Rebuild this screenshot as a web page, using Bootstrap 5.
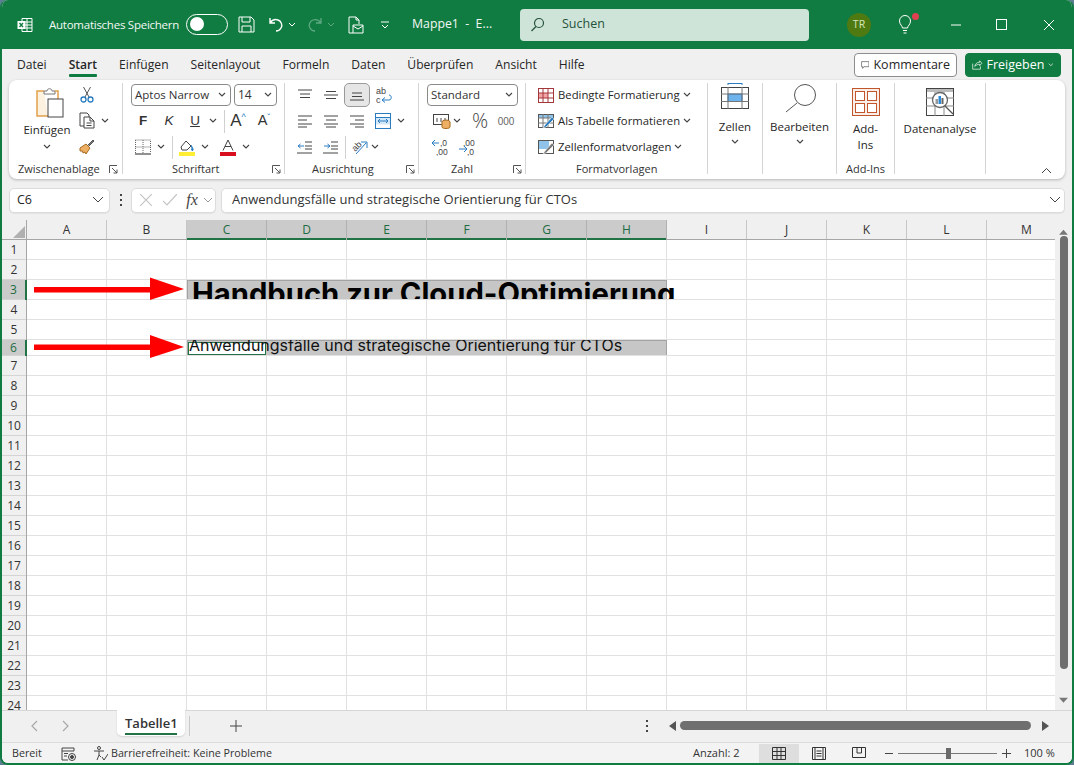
<!DOCTYPE html>
<html lang="de">
<head>
<meta charset="utf-8">
<title>Mappe1 - Excel</title>
<link rel="stylesheet" href="https://cdn.jsdelivr.net/npm/bootstrap@5.3.0/dist/css/bootstrap.min.css">
<style>
html,body{margin:0;height:765px;overflow:hidden;background:#5d7f92}
body{font-family:"Open Sans","Noto Sans",sans-serif;font-size:12px;color:#262626}
.xl-win{width:1074px;height:765px;background:#f0f0f0;border-radius:8px;overflow:hidden;border:solid #107c41;border-width:0 2px 2px 2px}
.xl-title{height:49px;background:#107c41;color:#fff;margin:0 -2px}
.xl-title svg{display:block;flex:none}
.tt-txt{font-size:12.3px;color:#f3f8f5}
.tt-auto{margin-left:16px;width:137px;font-size:11.5px;letter-spacing:-.25px}
.tt-excel{margin-left:17px}
.tt-toggle{width:42px;height:21px;border:1.5px solid #fff;border-radius:11px;padding:2px 3px}
.tt-toggle i{display:block;width:14px;height:14px;border-radius:50%;background:#fff}
.tt-doc{width:108px}
.xl-search{width:289px;height:32px;background:#cfe4d8;border-radius:4px;color:#25523a;font-size:12.5px;padding-left:9px}
.xl-avatar{width:24px;height:24px;border-radius:50%;background:#4f7a12;color:#d8e6b8;font-size:10.5px}
.xl-bulb{position:relative;width:20px}
.xl-bulb i{position:absolute;right:-2px;top:-2px;width:7px;height:7px;border-radius:50%;background:#e04050}
.ml1{margin-left:1px}.ml2{margin-left:2px}.ml3{margin-left:3px}.ml4{margin-left:4px}.ml5{margin-left:5px}.ml6{margin-left:6px}.ml10{margin-left:10px}.ml13{margin-left:13px}.ml16{margin-left:16px}.ml17{margin-left:17px}.ml22{margin-left:22px}.ml26{margin-left:26px}.ml33{margin-left:33px}.ml34{margin-left:34px}.ml36{margin-left:36px}.ml38{margin-left:38px}
.xl-tabs{height:31px;padding-left:15px}
.xl-tabs .nav-link{padding:0;color:#262626;font-size:12.1px;line-height:30px;height:30px;position:relative}
.xl-tabs .nav-item{margin-right:22px}
.xl-tabs .nav-link.active{font-weight:600;color:#262626}
.xl-tabs .nav-link.active::after{content:"";position:absolute;left:0;right:0;bottom:3px;height:2.5px;background:#107c41;border-radius:1px}
.xl-cmd{height:24px;font-size:12.5px;padding:0 6px;border-radius:4px;line-height:22px}
.xl-cmt{width:103px;background:#fff;border:1px solid #8d8d8d;color:#262626}
.xl-share{width:96px;background:#107c41;border:1px solid #107c41;color:#fff;margin:0 11px 0 8px}
.xl-cmd:hover{background:inherit}
.xl-ribbon{height:99px;margin:0 7px;background:#fff;border-radius:8px;box-shadow:0 1px 3px rgba(0,0,0,.25);padding-top:3px;position:relative}
.rb-g{height:91px;border-right:1px solid #d4d4d4;flex:none}
.rb-z{width:114px}.rb-s{width:162px}.rb-a{width:134px}.rb-n{width:107px}.rb-f{width:182px}.rb-ze{width:55px}.rb-b{width:74px}.rb-ai{width:58px}.rb-d{width:91px;padding-top:5px}
.rb-body{height:77px;margin-top:-1px}
.rb-lab{height:20px;line-height:20px;font-size:11px;color:#333;white-space:nowrap}
.rb-lab svg{flex:none}
.lp-z{padding:0 4px 0 9px}.lp-s{padding:0 3px 0 49px}.lp-a{padding:0 3px 0 27px}.lp-n{padding:0 3px 0 32px}.lp-f{padding:0 0 0 50px}
.rw{height:26px}
.pd7{padding-left:7px}.pd8{padding-left:8px}
.tc{display:inline-flex;align-items:center;justify-content:center;flex:none;height:25px;color:#333}
.c6{width:6px}.c8{width:8px}.c10{width:10px}.c12{width:12px}.c20{width:20px}.c24{width:24px}.c25{width:25px}.c26{width:26px}
.vs{width:1px;height:23px;background:#d0d0d0;flex:none}
.tc-on{background:#e6e6e6;border:1px solid #9a9a9a;border-radius:5px;height:24px}
.rb-combo{height:22px;border:1px solid #8a8a8a;border-radius:4px;padding:0 4px 0 3px;font-size:11.5px;margin-top:2px;color:#333;background:#fff}
.cb-f{width:100px}.cb-n{width:43px;margin-left:3px;font-size:12px}.cb-sd{width:91px}
.rb-paste{width:56px;margin-left:10px}
.pa-ic{margin:5px 0 0 5px}
.pa-lab{margin-top:3px}
.pa-ch{margin-top:6px}
.rb-big{font-size:11.5px;line-height:16px;color:#262626;text-align:center}
.rb-fmt{height:26px;padding-left:12px;font-size:11.3px;white-space:nowrap;color:#262626}
.rb-fmt span{margin:0 3px 0 4px}
.rb-ch{position:absolute;right:13px;bottom:5px}
.ze-lab{margin-top:9px}.be-lab{margin-top:6px}.ai-lab{margin-top:5px}
.be-ic{margin-left:2px}
.ai-body{margin-top:5px;height:71px}
.ft-sans{font-family:"Liberation Sans",sans-serif;font-size:13.5px}
.ft-a1{font-size:17px}
.ft-a2{font-size:14.5px}
.ft-up{font-size:9px;color:#2a7cc0;top:-.5em}
.ft-pct{font-family:"Open Sans",sans-serif;font-size:20px;font-weight:300;color:#444}
.ft-000{font-family:"Liberation Sans",sans-serif;font-size:10px;color:#666}
.xl-fx{height:26px;margin:8px 7px 7px}
.fx-box{background:#fff;border:1px solid #dcdcdc;border-radius:5px;height:25px;box-shadow:0 1px 1px rgba(0,0,0,.06)}
.fx-name{width:101px;padding:0 5px 0 7px;font-size:12.5px}
.fx-tools{width:85px;margin-left:21px;padding:0 1px 0 2px}
.fx-text{margin-left:5px;font-size:13px;padding:0 3px 0 10px;color:#333}
.fx-dots{margin:0 -12px 0 10px}
.fx-fn{font-family:"Liberation Serif",serif;font-size:16px;color:#444}
.xl-main{height:490px}
.xl-sheet{position:relative;width:1053px;overflow:hidden;background:#fff}
.hd-r{height:20px;background:#f0f0f0;border-bottom:1px solid #a6a6a6}
.hd-c{width:80px;height:19px;line-height:19px;text-align:center;font-size:12px;border-right:1px solid #c6c6c6;color:#333;flex:none}
.hd-c.sel{background:#cbcbcb;color:#1d6b42;box-shadow:inset 0 -2px 0 #217346;height:20px;border-right-color:#b0b0b0}
.hd-corner{width:25px;flex:none;height:19px;border-right:1px solid #a6a6a6;position:relative}
.hd-tri{position:absolute;right:1px;bottom:1px}
.sr{height:20px;border-bottom:1px solid #e1e1e1;display:flex}
.sr-6{height:16px}
.rh{width:25px;flex:none;background:#f0f0f0;border-right:1px solid #a6a6a6;text-align:center;font-size:12px;line-height:20px;color:#333;margin-bottom:-1px;box-shadow:inset 0 -1px 0 #d4d4d4}
.rh.sel{background:#cbcbcb;color:#1d6b42;border-right:2px solid #217346}
.sr-6 .rh{line-height:15px}
.rc{flex:1;position:relative;overflow:hidden;background-image:linear-gradient(to right,transparent 79px,#e1e1e1 79px);background-size:80px 100%}
.sel-a{margin-left:160px;width:480px;height:20px;background:#c6c6c6;border:1px solid #a3a3a3;white-space:nowrap;font-family:"Inter","Liberation Sans",sans-serif}
.sel-t{font-size:29.2px;font-weight:700;color:#000;line-height:25px;padding:0 0 0 4px}
.sel-s{font-size:16px;color:#111;line-height:8px;height:16px;padding:0 0 0 1px;position:relative}
.sel-s span{position:relative;z-index:1}
.act{position:absolute;left:0;top:1px;width:78px;height:13px;background:#fff;border:1px solid #217346}
.xl-arrows{position:absolute;left:0;top:0;pointer-events:none}
.xl-vs{width:17px;background:#f0f0f0}
.vs-thumb{width:8px;height:446px;background:#6f6f6f;border-radius:4px;margin:-5px auto 0 5px}
.vs-dn{margin-top:24px}
.xl-bar{height:32px;border-top:1px solid #d6d6d6;background:#f0f0f0;padding-bottom:2px}
.tb-nav{width:115px;padding-left:28px}
.tb-tab{width:68px;height:26px;margin-top:-1px;background:#fff;border-radius:0 0 5px 5px;font-weight:600;font-size:13px;color:#333;padding:0 8px;line-height:26px;position:relative;box-shadow:0 1px 2px rgba(0,0,0,.12)}
.tb-tab::after{content:"";position:absolute;left:8px;right:8px;bottom:1px;height:2px;background:#217346}
.tb-sep{width:1px;height:20px;background:#c8c8c8;margin:0 0 0 4px}
.tb-plus{margin-left:40px}
.tb-dots{margin-left:404px}
.tb-l{margin-left:21px}
.hs-thumb{width:351px;height:9px;background:#6f6f6f;border-radius:5px;margin:0 8px 0 4px}
.tb-r{margin-left:3px}
.xl-status{height:21px;border-top:1px solid #dcdcdc;background:#f3f3f3;font-size:10.7px;color:#333;padding:1px 0 0 10px;white-space:nowrap}
.st-bereit{width:32px}
.st-a11y{margin-left:3px;width:582px}
.st-count{width:66px;font-size:11px}
.st-view{width:40px;height:20px}
.st-view.on{background:#dedede}
.st-slider{width:99px;height:1px;background:#777;position:relative;margin:0 5px}
.st-slider i{position:absolute;left:48px;top:-5px;width:5px;height:11px;background:#6a6a6a}
.st-minus{margin-left:6px}
.st-zoom{margin-left:13px;font-size:11px}
</style>
</head>
<body>
<div class="xl-win d-flex flex-column">

<div class="xl-title d-flex align-items-center">
  <svg class="tt-excel" width="16" height="16" viewBox="0 0 16 16" fill="none" stroke="#fff"><path d="M5 1.500h10v13H5zM5 5h10M5 8h10M5 11h10M10 1.500v13"/><rect x="0.500" y="4" width="8" height="8" fill="#fff" stroke="none"/><path d="M2.500 6l3.500 4M6 6l-3.500 4" stroke="#107c41" stroke-width="1.400"/></svg>
  <span class="tt-txt tt-auto text-nowrap">Automatisches Speichern</span>
  <span class="tt-toggle"><i></i></span>
  <svg class="ml10" width="17" height="17" viewBox="0 0 17 17" fill="none" stroke="#fff" stroke-width="1"><path d="M1 1h12l3 3v12H1zM4 1v5h8V1M4 16v-6h9v6"/></svg>
  <svg class="ml13" width="17" height="17" viewBox="0 0 17 17" fill="none" stroke="#fff" stroke-width="1.400"><path d="M2 2v5h5M2 7c2-3 5-4 8-3 3 1 5 5 3 8-1 2-3 3-5 3"/></svg>
  <svg class="ml3" width="8" height="6" viewBox="0 0 8 6" fill="none" stroke="#fff"><path d="M1 1l3 3 3-3"/></svg>
  <svg class="ml10" width="17" height="17" viewBox="0 0 17 17" fill="none" stroke="#5fa883" stroke-width="1.300"><path d="M15 2v5h-5M15 7c-2-3-5-4-8-3-3 1-5 5-3 8 1 2 3 3 5 3"/></svg>
  <svg class="ml4" width="8" height="6" viewBox="0 0 8 6" fill="none" stroke="#5fa883"><path d="M1 1l3 3 3-3"/></svg>
  <svg class="ml13" width="16" height="18" viewBox="0 0 16 18" fill="none" stroke="#fff"><path d="M1 1h7l3 3v4M1 1v16h4M8 1v3h3M5 9h10v8H5zM5 10l5 3 5-3"/></svg>
  <svg class="ml16" width="10" height="8" viewBox="0 0 10 8" fill="none" stroke="#fff"><path d="M1 1h8M2 4l3 3 3-3"/></svg>
  <span class="tt-txt tt-doc ml22 text-nowrap">Mappe1&nbsp; -&nbsp; E...</span>
  <div class="xl-search d-flex align-items-center">
    <svg class="ml1" width="15" height="15" viewBox="0 0 15 15" fill="none" stroke="#25523a" stroke-width="1.200"><circle cx="9" cy="6" r="4.500"/><path d="M6 9.500L1.500 14"/></svg>
    <span class="ml17">Suchen</span>
  </div>
  <span class="xl-avatar ml38 d-flex align-items-center justify-content-center">TR</span>
  <span class="xl-bulb ml26">
    <svg width="16" height="20" viewBox="0 0 16 20" fill="none" stroke="#fff"><path d="M5.500 13c0-2-3-3.500-3-7a5.500 5.500 0 0 1 11 0c0 3.500-3 5-3 7zM6 15.500h4M6.500 18h3"/></svg><i></i>
  </span>
  <svg class="ml33" width="12" height="2" viewBox="0 0 12 2" stroke="#fff"><path d="M1 1h10"/></svg>
  <svg class="ml34" width="11" height="11" viewBox="0 0 11 11" fill="none" stroke="#fff"><rect x=".5" y=".5" width="10" height="10"/></svg>
  <svg class="ml36" width="12" height="12" viewBox="0 0 12 12" stroke="#fff"><path d="M1 1l10 10M11 1L1 11"/></svg>
</div>

<div class="xl-tabs d-flex align-items-center">
  <ul class="nav flex-nowrap me-auto">
    <li class="nav-item"><a class="nav-link" href="#">Datei</a></li>
    <li class="nav-item"><a class="nav-link active" href="#">Start</a></li>
    <li class="nav-item"><a class="nav-link" href="#">Einfügen</a></li>
    <li class="nav-item"><a class="nav-link" href="#">Seitenlayout</a></li>
    <li class="nav-item"><a class="nav-link" href="#">Formeln</a></li>
    <li class="nav-item"><a class="nav-link" href="#">Daten</a></li>
    <li class="nav-item"><a class="nav-link" href="#">Überprüfen</a></li>
    <li class="nav-item"><a class="nav-link" href="#">Ansicht</a></li>
    <li class="nav-item"><a class="nav-link" href="#">Hilfe</a></li>
  </ul>
  <button class="btn xl-cmd xl-cmt d-flex align-items-center gap-1 text-nowrap"><svg width="15" height="14" viewBox="0 0 15 14" fill="none" stroke="#333"><path d="M1 1h13v9H5l-2 3v-3H1z"/></svg>Kommentare</button>
  <button class="btn xl-cmd xl-share d-flex align-items-center gap-1 text-nowrap"><svg width="15" height="14" viewBox="0 0 15 14" fill="none" stroke="#fff"><path d="M1 5v8h11V9M4 9c0-3 3-6 7-6V1l3 3.500L11 8V6C8 6 6 7 4 9z"/></svg>Freigeben<svg width="8" height="6" viewBox="0 0 8 6" fill="none" stroke="#fff"><path d="M1 1l3 3 3-3"/></svg></button>
</div>

<svg width="0" height="0" class="position-absolute">
  <defs>
    <symbol id="chv" viewBox="0 0 8 6"><path d="M1 1l3 3 3-3" fill="none" stroke="#444" stroke-width="1.100"/></symbol>
    <symbol id="lau" viewBox="0 0 9 9"><path d="M.5 8V.5H8M3 3l5 5M8 4.500V8H4.500" fill="none" stroke="#555"/></symbol>
    <symbol id="lt" viewBox="0 0 16 14"><path d="M1 2h14M1 6h9M1 10h14M1 13h9" fill="none" stroke="#444"/></symbol>
    <symbol id="ct" viewBox="0 0 16 14"><path d="M1 2h14M3 6h10M1 10h14M3 13h10" fill="none" stroke="#444"/></symbol>
    <symbol id="rt" viewBox="0 0 16 14"><path d="M1 2h14M6 6h9M1 10h14M6 13h9" fill="none" stroke="#444"/></symbol>
    <symbol id="vt" viewBox="0 0 16 14"><path d="M1 2h14M3 6h10M3 9.500h10" fill="none" stroke="#444"/></symbol>
    <symbol id="vm" viewBox="0 0 16 14"><path d="M3 3.500h10M1 7h14M3 10.500h10" fill="none" stroke="#444"/></symbol>
    <symbol id="vb" viewBox="0 0 16 14"><path d="M3 5h10M3 8.500h10M1 12h14" fill="none" stroke="#444"/></symbol>
  </defs>
</svg>

<div class="xl-ribbon d-flex">
  <div class="rb-g rb-z">
    <div class="rb-body d-flex">
      <div class="rb-paste rb-big d-flex flex-column align-items-center">
        <svg class="pa-ic" width="30" height="32" viewBox="0 0 30 32" fill="none"><path d="M9 4H2v25h11" stroke="#e2a049" stroke-width="1.500" fill="#fdf2e0"/><path d="M9 4h3c0-3 5-3 5 0h3v3H9z" stroke="#777" fill="#fff"/><path d="M20 4h3v8" stroke="#e2a049" stroke-width="1.500"/><rect x="13" y="12" width="15" height="18" fill="#fff" stroke="#444"/></svg>
        <span class="pa-lab">Einfügen</span>
        <svg class="pa-ch" width="8" height="6"><use href="#chv"/></svg>
      </div>
      <div>
        <div class="rw d-flex"><span class="tc c24"><svg width="14" height="17" viewBox="0 0 14 17" fill="none"><path d="M3.500 1L9 11M10.500 1L5 11" stroke="#555"/><circle cx="3.500" cy="13.500" r="2.500" stroke="#2a7cc0" stroke-width="1.300"/><circle cx="10.500" cy="13.500" r="2.500" stroke="#2a7cc0" stroke-width="1.300"/></svg></span></div>
        <div class="rw d-flex"><span class="tc c24"><svg width="16" height="17" viewBox="0 0 16 17" fill="none" stroke="#444"><path d="M5 14H1V1h7l2 2v2"/><path d="M5 5h6l4 4v7H5zM11 5v4h4M7.500 11h5M7.500 13.500h5"/></svg></span><span class="tc c12"><svg width="8" height="6"><use href="#chv"/></svg></span></div>
        <div class="rw d-flex"><span class="tc c24"><svg width="16" height="16" viewBox="0 0 16 16" fill="none"><path d="M1 9l6-4 4 4-4 6-1-2-2 1-.5-2L1 12z" fill="#eeb064" stroke="#a76a1e"/><path d="M9 6l5-5 1 1-5 5" fill="#777" stroke="#555"/></svg></span></div>
      </div>
    </div>
    <div class="rb-lab lp-z d-flex align-items-center justify-content-between"><span>Zwischenablage</span><svg width="9" height="9"><use href="#lau"/></svg></div>
  </div>

  <div class="rb-g rb-s">
    <div class="rb-body">
      <div class="rw d-flex pd8">
        <div class="rb-combo cb-f d-flex align-items-center justify-content-between">Aptos Narrow<svg width="8" height="6"><use href="#chv"/></svg></div>
        <div class="rb-combo cb-n d-flex align-items-center justify-content-between">14<svg width="8" height="6"><use href="#chv"/></svg></div>
      </div>
      <div class="rw d-flex align-items-center pd7">
        <span class="tc c26 fw-bold ft-sans">F</span>
        <span class="tc c26 fst-italic ft-sans">K</span>
        <span class="tc c26 text-decoration-underline ft-sans">U</span>
        <span class="tc c10"><svg width="8" height="6"><use href="#chv"/></svg></span>
        <span class="vs ml6"></span>
        <span class="tc c26 ft-sans ft-a1">A<sup class="ft-up">^</sup></span>
        <span class="tc c26 ft-sans ft-a2">A<sup class="ft-up">ˇ</sup></span>
      </div>
      <div class="rw d-flex align-items-center pd7">
        <span class="tc c25"><svg width="16" height="16" viewBox="0 0 16 16" fill="none" stroke="#666" stroke-dasharray="1 1"><path d="M.5 1h15v13M.5 1v13M8 1v13M.5 8h15"/><path d="M0 15h16" stroke="#222" stroke-dasharray="none"/></svg></span>
        <span class="tc c12"><svg width="8" height="6"><use href="#chv"/></svg></span>
        <span class="vs ml5"></span>
        <span class="tc c26 ml1"><svg width="18" height="18" viewBox="0 0 18 18" fill="none"><path d="M3 9l5-6 5 5-4 4H4z" stroke="#444"/><path d="M13 7l2 4c1 2-2 2-1.500 0" stroke="#2a7cc0" fill="#2a7cc0"/><rect x="1" y="14" width="16" height="4" fill="#ffee33"/></svg></span>
        <span class="tc c10"><svg width="8" height="6"><use href="#chv"/></svg></span>
        <span class="tc c26 ml5"><svg width="16" height="17" viewBox="0 0 16 17"><path d="M3 11.500L8 1l5 10.500M5 7.500h6" fill="none" stroke="#444"/><rect y="13" width="16" height="4" fill="#d80f1e"/></svg></span>
        <span class="tc c10"><svg width="8" height="6"><use href="#chv"/></svg></span>
      </div>
    </div>
    <div class="rb-lab lp-s d-flex align-items-center justify-content-between"><span>Schriftart</span><svg width="9" height="9"><use href="#lau"/></svg></div>
  </div>

  <div class="rb-g rb-a">
    <div class="rb-body">
      <div class="rw d-flex align-items-center pd7">
        <span class="tc c26"><svg width="16" height="14"><use href="#vt"/></svg></span>
        <span class="tc c26"><svg width="16" height="14"><use href="#vm"/></svg></span>
        <span class="tc c26 tc-on"><svg width="16" height="14"><use href="#vb"/></svg></span>
        <span class="tc c26 ml1"><svg width="16" height="18" viewBox="0 0 16 18" fill="none"><text x="0" y="8" font-size="9" fill="#444" font-family="Liberation Sans">ab</text><text x="0" y="17" font-size="9" fill="#444" font-family="Liberation Sans">c</text><path d="M6 14h7c3 0 3-5 0-5M6 14l3-2.500M6 14l3 2.500" stroke="#2a7cc0"/></svg></span>
      </div>
      <div class="rw d-flex align-items-center pd7">
        <span class="tc c26"><svg width="16" height="14"><use href="#lt"/></svg></span>
        <span class="tc c26"><svg width="16" height="14"><use href="#ct"/></svg></span>
        <span class="tc c26"><svg width="16" height="14"><use href="#rt"/></svg></span>
        <span class="tc c26"><svg width="16" height="16" viewBox="0 0 16 16" fill="none"><rect x=".5" y=".5" width="15" height="15" stroke="#2a7cc0"/><path d="M0 4.500h16" stroke="#2a7cc0"/><rect x="1" y="5" width="14" height="6.500" fill="#d3e8f8"/><path d="M3 8h10M3 8l2-2M3 8l2 2M13 8l-2-2M13 8l-2 2" stroke="#2a7cc0"/></svg></span>
        <span class="tc c10"><svg width="8" height="6"><use href="#chv"/></svg></span>
      </div>
      <div class="rw d-flex align-items-center pd7">
        <span class="tc c26"><svg width="16" height="14" viewBox="0 0 16 14" fill="none"><path d="M8 2h7M8 6h7M8 9h7M0 13h15" stroke="#444"/><path d="M1 6h6M1 6l2.500-2M1 6l2.500 2" stroke="#2a7cc0"/></svg></span>
        <span class="tc c26"><svg width="16" height="14" viewBox="0 0 16 14" fill="none"><path d="M8 2h7M8 6h7M8 9h7M0 13h15" stroke="#444"/><path d="M7 6H1M7 6L4.500 4M7 6L4.500 8" stroke="#2a7cc0"/></svg></span>
        <span class="vs ml1"></span>
        <span class="tc c24 ml1"><svg width="17" height="16" viewBox="0 0 17 16" fill="none"><text x="1" y="11" font-size="9" fill="#444" font-family="Liberation Sans" transform="rotate(-45 5 8)">ab</text><path d="M5 15L15 4M10 3h6v6" stroke="#2a7cc0"/></svg></span>
        <span class="tc c8"><svg width="8" height="6"><use href="#chv"/></svg></span>
      </div>
    </div>
    <div class="rb-lab lp-a d-flex align-items-center justify-content-between"><span>Ausrichtung</span><svg width="9" height="9"><use href="#lau"/></svg></div>
  </div>

  <div class="rb-g rb-n">
    <div class="rb-body">
      <div class="rw d-flex pd8"><div class="rb-combo cb-sd d-flex align-items-center justify-content-between">Standard<svg width="8" height="6"><use href="#chv"/></svg></div></div>
      <div class="rw d-flex align-items-center pd8">
        <span class="tc c20 ml5"><svg width="18" height="15" viewBox="0 0 18 15" fill="none"><rect x=".5" y=".5" width="15" height="10" stroke="#444"/><path d="M4 4v4M8 4v4M12 4v4" stroke="#444"/><ellipse cx="13" cy="8" rx="4" ry="2" fill="#eeb064" stroke="#a76a1e"/><path d="M9 8v5c0 2 8 2 8 0V8" fill="#eeb064" stroke="#a76a1e"/></svg></span>
        <span class="tc c10"><svg width="8" height="6"><use href="#chv"/></svg></span>
        <span class="tc c26 ml5 ft-pct">%</span>
        <span class="tc c26 ft-000">000</span>
      </div>
      <div class="rw d-flex align-items-center pd8">
        <span class="tc c26"><svg width="18" height="18" viewBox="0 0 18 18" fill="none"><path d="M1 5h7M1 5l3-3M1 5l3 3" stroke="#2a7cc0"/><text x="9" y="8" font-size="8.500" fill="#444" font-family="Liberation Sans">,0</text><text x="5" y="17" font-size="8.500" fill="#444" font-family="Liberation Sans">,00</text></svg></span>
        <span class="tc c26 ml1"><svg width="18" height="18" viewBox="0 0 18 18" fill="none"><text x="5" y="8" font-size="8.500" fill="#444" font-family="Liberation Sans">,00</text><path d="M1 11h8M9 11l-3-3M9 11l-3 3" stroke="#2a7cc0"/><text x="9" y="17" font-size="8.500" fill="#444" font-family="Liberation Sans">,0</text></svg></span>
      </div>
    </div>
    <div class="rb-lab lp-n d-flex align-items-center justify-content-between"><span>Zahl</span><svg width="9" height="9"><use href="#lau"/></svg></div>
  </div>

  <div class="rb-g rb-f">
    <div class="rb-body">
      <div class="rb-fmt d-flex align-items-center"><svg width="16" height="15" viewBox="0 0 16 15" fill="none"><rect x=".5" y=".5" width="15" height="14" stroke="#a4373a"/><rect x="1" y="5" width="9" height="5" fill="#f4a6a6"/><path d="M0 5h16M0 10h16M5 0v15M10 0v15" stroke="#a4373a"/></svg><span>Bedingte Formatierung</span><svg width="8" height="6"><use href="#chv"/></svg></div>
      <div class="rb-fmt d-flex align-items-center"><svg width="16" height="16" viewBox="0 0 16 16" fill="none"><rect x=".5" y="1.500" width="15" height="13" stroke="#555"/><rect x="1" y="2" width="14" height="3" fill="#8fc3ea"/><path d="M0 5h16M0 10h16M5 1v14M10 1v14" stroke="#777"/><path d="M5 15l2-3 7-8 2 2-8 8z" fill="#2a7cc0" stroke="#fff" stroke-width=".5"/></svg><span>Als Tabelle formatieren</span><svg width="8" height="6"><use href="#chv"/></svg></div>
      <div class="rb-fmt d-flex align-items-center"><svg width="16" height="16" viewBox="0 0 16 16" fill="none"><rect x=".5" y="1.500" width="15" height="13" stroke="#555"/><rect x="1" y="2" width="10" height="8" fill="#8fc3ea"/><path d="M5 15l2-3 7-8 2 2-8 8z" fill="#777" stroke="#fff" stroke-width=".5"/></svg><span>Zellenformatvorlagen</span><svg width="8" height="6"><use href="#chv"/></svg></div>
    </div>
    <div class="rb-lab lp-f">Formatvorlagen</div>
  </div>

  <div class="rb-g rb-ze rb-big d-flex flex-column align-items-center">
    <svg width="28" height="27" viewBox="0 0 28 27" fill="none"><path d="M7 .5h14M7 0v2M21 0v2" stroke="#2a7cc0"/><rect x=".5" y="4.500" width="27" height="21" stroke="#444"/><rect x="7" y="11" width="14" height="7.500" fill="#6db3ee" stroke="#2a7cc0"/><path d="M0 11h28M0 18.500h28M7 4v22M21 4v22" stroke="#777"/></svg>
    <span class="ze-lab">Zellen</span>
    <svg width="8" height="6" class="mt-1"><use href="#chv"/></svg>
  </div>

  <div class="rb-g rb-b rb-big d-flex flex-column align-items-center">
    <svg class="be-ic" width="32" height="30" viewBox="0 0 32 30" fill="none" stroke="#555"><circle cx="20" cy="12" r="10.500"/><path d="M12 20L1 29"/></svg>
    <span class="be-lab">Bearbeiten</span>
    <svg width="8" height="6" class="mt-1"><use href="#chv"/></svg>
  </div>

  <div class="rb-g rb-ai">
    <div class="rb-body ai-body rb-big d-flex flex-column align-items-center">
      <svg width="28" height="28" viewBox="0 0 28 28" fill="#fbeee8" stroke="#c0562a"><rect x=".5" y=".5" width="27" height="27"/><rect x="3.500" y="3.500" width="9" height="9" fill="#fff"/><rect x="15.500" y="3.500" width="9" height="9" fill="#fff"/><rect x="3.500" y="15.500" width="9" height="9" fill="#fff"/><rect x="15.500" y="15.500" width="9" height="9" fill="#fff"/></svg>
      <span class="ai-lab">Add-<br>Ins</span>
    </div>
    <div class="rb-lab text-center">Add-Ins</div>
  </div>

  <div class="rb-g rb-d rb-big d-flex flex-column align-items-center">
    <svg width="28" height="28" viewBox="0 0 28 28" fill="none"><rect x=".5" y=".5" width="27" height="27" stroke="#444"/><rect x="1" y="1" width="26" height="3" fill="#bbb"/><path d="M0 10h28M0 18h28M9 4v24M18 4v24" stroke="#888"/><circle cx="14" cy="12" r="7.500" fill="#fff" stroke="#666" stroke-width="1.300"/><path d="M19 18l8 8" stroke="#555" stroke-width="1.300"/><rect x="9.500" y="11" width="2.500" height="5" fill="#999"/><rect x="12.500" y="8" width="2.500" height="8" fill="#2a8ad8"/><rect x="15.500" y="10" width="2" height="6" fill="#666"/></svg>
    <span class="ai-lab">Datenanalyse</span>
  </div>

  <svg class="rb-ch" width="11" height="7" viewBox="0 0 11 7" fill="none" stroke="#444"><path d="M1 6l4.500-4.500L10 6"/></svg>
</div>

<div class="xl-fx d-flex align-items-center">
  <div class="fx-box fx-name d-flex align-items-center justify-content-between"><span>C6</span><svg width="12" height="8" viewBox="0 0 12 8" fill="none" stroke="#444"><path d="M1 1l5 5 5-5"/></svg></div>
  <svg class="fx-dots" width="2" height="12" viewBox="0 0 2 12" fill="#444"><rect width="2" height="2"/><rect y="5" width="2" height="2"/><rect y="10" width="2" height="2"/></svg>
  <div class="fx-box fx-tools d-flex align-items-center justify-content-between">
    <span class="tc c24"><svg width="12" height="12" viewBox="0 0 12 12" stroke="#c4c4c4" stroke-width="1.200"><path d="M0 0l12 12M12 0L0 12"/></svg></span>
    <span class="tc c24"><svg width="14" height="12" viewBox="0 0 14 12" fill="none" stroke="#c4c4c4" stroke-width="1.200"><path d="M0 7l4 4 10-11"/></svg></span>
    <span class="tc c20 fst-italic fx-fn">fx</span>
    <span class="tc c12"><svg width="10" height="7" viewBox="0 0 10 7" fill="none" stroke="#999"><path d="M1 1l4 4 4-4"/></svg></span>
  </div>
  <div class="fx-box fx-text flex-grow-1 d-flex align-items-center justify-content-between"><span>Anwendungsfälle und strategische Orientierung für CTOs</span><svg width="12" height="8" viewBox="0 0 12 8" fill="none" stroke="#444"><path d="M1 1l5 5 5-5"/></svg></div>
</div>

<div class="xl-main d-flex">
  <div class="xl-sheet">
    <div class="hd-r d-flex">
      <div class="hd-corner"><svg class="hd-tri" width="12" height="12" viewBox="0 0 12 12"><path d="M12 0v12H0z" fill="#b0b0b0"/></svg></div>
      <div class="hd-c">A</div><div class="hd-c">B</div><div class="hd-c sel">C</div><div class="hd-c sel">D</div><div class="hd-c sel">E</div><div class="hd-c sel">F</div><div class="hd-c sel">G</div><div class="hd-c sel">H</div><div class="hd-c">I</div><div class="hd-c">J</div><div class="hd-c">K</div><div class="hd-c">L</div><div class="hd-c">M</div>
    </div>
    <div class="sr"><div class="rh">1</div><div class="rc"></div></div>
    <div class="sr"><div class="rh">2</div><div class="rc"></div></div>
    <div class="sr"><div class="rh sel">3</div><div class="rc"><div class="sel-a sel-t">Handbuch zur Cloud-Optimierung</div></div></div>
    <div class="sr"><div class="rh">4</div><div class="rc"></div></div>
    <div class="sr"><div class="rh">5</div><div class="rc"></div></div>
    <div class="sr sr-6"><div class="rh sel">6</div><div class="rc"><div class="sel-a sel-s"><div class="act"></div><span>Anwendungsfälle und strategische Orientierung für CTOs</span></div></div></div>
    <div class="sr"><div class="rh">7</div><div class="rc"></div></div>
    <div class="sr"><div class="rh">8</div><div class="rc"></div></div>
    <div class="sr"><div class="rh">9</div><div class="rc"></div></div>
    <div class="sr"><div class="rh">10</div><div class="rc"></div></div>
    <div class="sr"><div class="rh">11</div><div class="rc"></div></div>
    <div class="sr"><div class="rh">12</div><div class="rc"></div></div>
    <div class="sr"><div class="rh">13</div><div class="rc"></div></div>
    <div class="sr"><div class="rh">14</div><div class="rc"></div></div>
    <div class="sr"><div class="rh">15</div><div class="rc"></div></div>
    <div class="sr"><div class="rh">16</div><div class="rc"></div></div>
    <div class="sr"><div class="rh">17</div><div class="rc"></div></div>
    <div class="sr"><div class="rh">18</div><div class="rc"></div></div>
    <div class="sr"><div class="rh">19</div><div class="rc"></div></div>
    <div class="sr"><div class="rh">20</div><div class="rc"></div></div>
    <div class="sr"><div class="rh">21</div><div class="rc"></div></div>
    <div class="sr"><div class="rh">22</div><div class="rc"></div></div>
    <div class="sr"><div class="rh">23</div><div class="rc"></div></div>
    <div class="sr"><div class="rh">24</div><div class="rc"></div></div>
    <svg class="xl-arrows" width="1053" height="490" viewBox="2 220 1053 490"><path d="M34 287H150V277.500L184 289 150 300V292.500H34z" fill="#f00"/><path d="M34 344.500H150V335L184 347 150 358V350H34z" fill="#f00"/></svg>
  </div>
  <div class="xl-vs d-flex flex-column align-items-start">
    <svg width="17" height="17" viewBox="0 0 17 17" class="mt-1"><path d="M4 11l4.500-5 4.500 5z" fill="#777"/></svg>
    <div class="vs-thumb"></div>
    <svg width="17" height="17" viewBox="0 0 17 17" class="vs-dn"><path d="M4 5l4.500 5 4.500-5z" fill="#777"/></svg>
  </div>
</div>

<div class="xl-bar d-flex align-items-center">
  <div class="tb-nav d-flex align-items-center gap-4">
    <svg width="8" height="12" viewBox="0 0 8 12" fill="none" stroke="#a8a8a8" stroke-width="1.200"><path d="M7 1L2 6l5 5"/></svg>
    <svg width="8" height="12" viewBox="0 0 8 12" fill="none" stroke="#a8a8a8" stroke-width="1.200"><path d="M1 1l5 5-5 5"/></svg>
  </div>
  <div class="tb-tab align-self-start text-nowrap">Tabelle1</div>
  <span class="tb-sep"></span>
  <svg class="tb-plus" width="12" height="12" viewBox="0 0 12 12" stroke="#444"><path d="M6 0v12M0 6h12"/></svg>
  <svg class="tb-dots" width="2" height="12" viewBox="0 0 2 12" fill="#444"><rect width="2" height="2"/><rect y="5" width="2" height="2"/><rect y="10" width="2" height="2"/></svg>
  <svg class="tb-l" width="7" height="10" viewBox="0 0 7 10"><path d="M7 0v10L0 5z" fill="#555"/></svg>
  <div class="hs-thumb"></div>
  <svg class="tb-r" width="7" height="10" viewBox="0 0 7 10"><path d="M0 0v10l7-5z" fill="#555"/></svg>
</div>

<div class="xl-status d-flex align-items-center">
  <span class="st-bereit">Bereit</span>
  <svg class="ml17" width="15" height="14" viewBox="0 0 15 14" fill="none" stroke="#444"><path d="M1 1h12v3H1zM1 4v9h6M3 6.500h4M3 9h3"/><circle cx="11" cy="10" r="3.500"/><circle cx="11" cy="10" r="1.500" fill="#444"/></svg>
  <svg class="ml17" width="15" height="15" viewBox="0 0 15 15" fill="none" stroke="#444"><circle cx="6" cy="2" r="1.500"/><path d="M1 5h10M6 5v4l-2 5M6 9l2 2M9 11l2 3 4-6"/></svg>
  <span class="st-a11y">Barrierefreiheit: Keine Probleme</span>
  <span class="st-count">Anzahl: 2</span>
  <span class="st-view on d-flex align-items-center justify-content-center"><svg width="14" height="13" viewBox="0 0 14 13" fill="none" stroke="#333"><path d="M.5.5h13v12H.5zM.5 4.500h13M.5 8.500h13M5 0v13M9 0v13"/></svg></span>
  <span class="st-view d-flex align-items-center justify-content-center"><svg width="14" height="13" viewBox="0 0 14 13" fill="none" stroke="#333"><path d="M.5.5h13v12H.5zM3 .5v12h8V.5M4.500 4h5M4.500 6.500h5M4.500 9h5"/></svg></span>
  <span class="st-view d-flex align-items-center justify-content-center"><svg width="14" height="13" viewBox="0 0 14 13" fill="none" stroke="#333"><path d="M.5.5h13v10H.5zM5 .5V6h4.500V.5"/></svg></span>
  <svg class="st-minus" width="8" height="1" viewBox="0 0 8 1" stroke="#444"><path d="M0 .5h8"/></svg>
  <span class="st-slider"><i></i></span>
  <svg width="9" height="9" viewBox="0 0 9 9" stroke="#444"><path d="M4.500 0v9M0 4.500h9"/></svg>
  <span class="st-zoom">100 %</span>
</div>

</div>
<script src="https://cdn.jsdelivr.net/npm/bootstrap@5.3.0/dist/js/bootstrap.bundle.min.js"></script>
</body>
</html>
